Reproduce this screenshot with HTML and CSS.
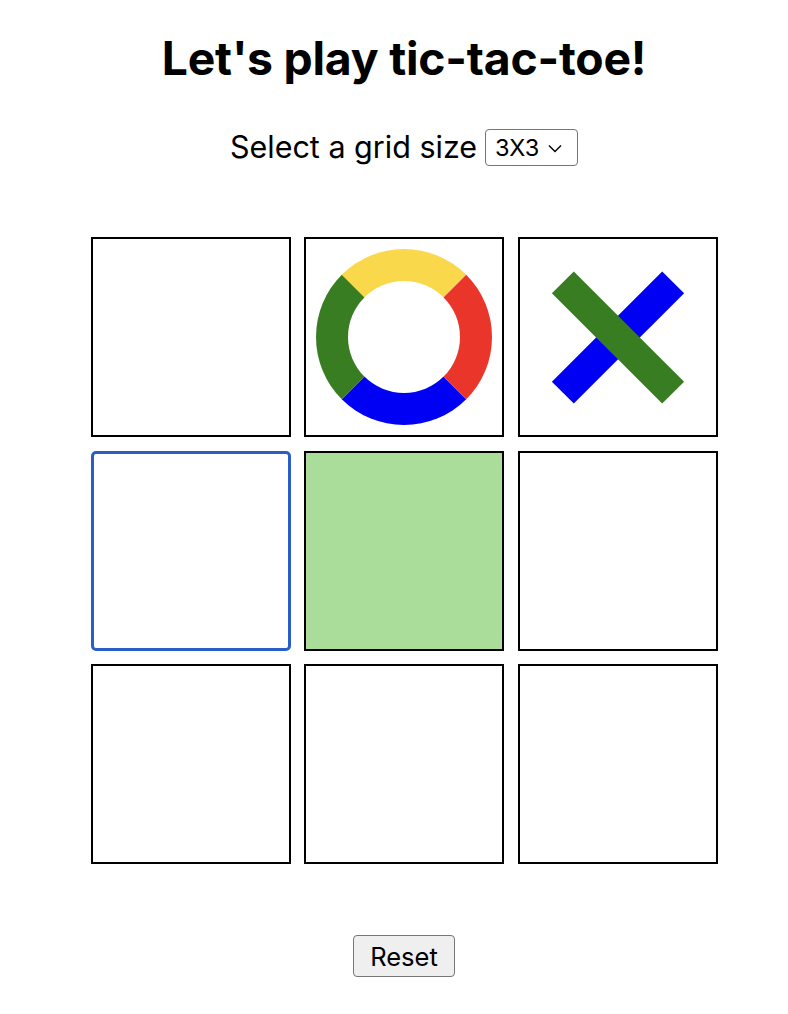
FILE: index.html
```html
<!DOCTYPE html>
<html lang="en">
<head>
<meta charset="utf-8">
<title>Tic-tac-toe</title>
<link rel="stylesheet" href="styles.css">
</head>
<body>
<main class="app">
  <h1 class="title">Let's play tic-tac-toe!</h1>
  <div class="size-row">
    <label class="size-label" for="size">Select a grid size</label>
    <div class="select">
      <span class="select-value">3X3</span>
      <svg class="chev" viewBox="0 0 14 9" width="14" height="9"><path d="M1 1.5 L7 7.5 L13 1.5" fill="none" stroke="#000" stroke-width="1.4"/></svg>
    </div>
  </div>
  <div class="board">
    <div class="cell"></div>
    <div class="cell"><div class="ring"></div></div>
    <div class="cell">
      <div class="cross">
        <span class="bar bar-blue"></span>
        <span class="bar bar-green"></span>
      </div>
    </div>
    <div class="cell cell-focus"></div>
    <div class="cell cell-hover"></div>
    <div class="cell"></div>
    <div class="cell"></div>
    <div class="cell"></div>
    <div class="cell"></div>
  </div>
  <div class="actions">
    <button class="reset" type="button">Reset</button>
  </div>
</main>
</body>
</html>
```
FILE: styles.css
```css
html, body {
  margin: 0;
  padding: 0;
  background: #fff;
}
body {
  font-family: Inter, "Liberation Sans", Arial, sans-serif;
  color: #000;
}
.app {
  padding: 0 0 0 20px;
  display: flex;
  flex-direction: column;
  align-items: center;
}
.title {
  margin: 30px 0 0;
  font-size: 46.3px;
  line-height: 56px;
  font-weight: 700;
  letter-spacing: -0.2px;
}
.size-row {
  margin-top: 41px;
  display: flex;
  align-items: center;
  gap: 8px;
}
.size-label {
  font-size: 30.5px;
  line-height: 36px;
}
.select {
  box-sizing: border-box;
  width: 93px;
  height: 37px;
  border: 1px solid #767676;
  border-radius: 4px;
  display: flex;
  align-items: center;
  padding: 0 7px 0 9px;
  gap: 9px;
  margin-top: 2px;
}
.select-value {
  font-size: 23.5px;
  line-height: 26px;
}
.chev {
  display: block;
  margin-top: 1px;
}
.board {
  margin-top: 71px;
  display: grid;
  grid-template-columns: repeat(3, 200px);
  grid-auto-rows: 200px;
  gap: 13.5px;
}
.cell {
  box-sizing: border-box;
  border: 2px solid #000;
  background: #fff;
  display: flex;
  align-items: center;
  justify-content: center;
  position: relative;
}
.cell-focus {
  border: 3px solid #2a5dc8;
  border-radius: 5px;
}
.cell-hover {
  background: #abdd9a;
}
.ring {
  box-sizing: border-box;
  width: 176px;
  height: 176px;
  border-radius: 50%;
  border: 32px solid;
  border-color: #f9d84b #e9352a #0000f5 #387d22;
}
.cross {
  position: relative;
  width: 156px;
  height: 156px;
}
.bar {
  position: absolute;
  left: 0;
  top: 62.5px;
  width: 156px;
  height: 31px;
}
.bar-blue {
  background: #0000f5;
  transform: rotate(-45deg);
}
.bar-green {
  background: #387d22;
  transform: rotate(45deg);
}
.actions {
  margin-top: 71px;
}
.reset {
  box-sizing: border-box;
  width: 102px;
  height: 42px;
  font-family: Inter, "Liberation Sans", Arial, sans-serif;
  font-size: 25.5px;
  color: #000;
  background: #efefef;
  border: 1px solid #767676;
  border-radius: 4px;
  padding: 0;
}
```
